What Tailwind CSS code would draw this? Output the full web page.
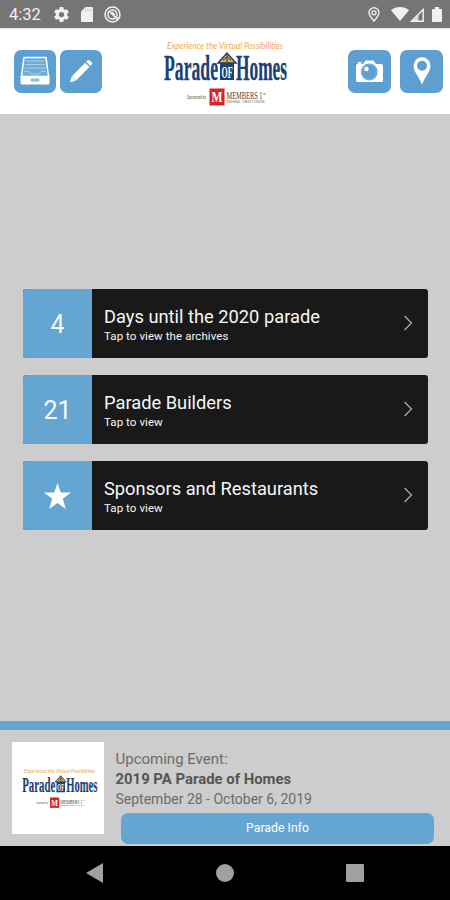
<!DOCTYPE html>
<html lang="en">
<head>
<meta charset="utf-8">
<title>Parade of Homes</title>
<script src="https://cdn.jsdelivr.net/npm/@tailwindcss/browser@4"></script>
</head>
<body class="w-[450px] h-[900px] overflow-hidden bg-[#cdcdcd] font-['Roboto',sans-serif] flex flex-col">
<svg class="hidden">
  <symbol id="logo" viewBox="0 0 126 68">
    <text x="5" y="10" font-family="Lato" font-style="italic" font-size="9.500" fill="#f0a850" textLength="116" lengthAdjust="spacingAndGlyphs">Experience the Virtual Possibilities</text>
    <g font-family="Liberation Serif" font-weight="bold" fill="#1d4172" stroke="#1d4172" stroke-width=".3">
      <text x="2" y="40.500" font-size="35" textLength="54" lengthAdjust="spacingAndGlyphs">Parade</text>
      <text x="74" y="40.500" font-size="35" textLength="51" lengthAdjust="spacingAndGlyphs">Homes</text>
    </g>
    <path d="M58 24h14v17H58z" fill="#1d4172"/>
    <path d="M56 24l9-10 9 10z" fill="#e9a82f" stroke="#1d4172" stroke-width="1.500"/>
    <path d="M65 15v8M61 21l4-3 4 3" stroke="#1d4172" fill="none"/>
    <text x="59.500" y="39" font-family="Liberation Serif" font-weight="bold" font-size="16" fill="#fff" textLength="11" lengthAdjust="spacingAndGlyphs">OF</text>
    <text x="25" y="60" font-family="Roboto" font-size="4.500" fill="#555" textLength="19" lengthAdjust="spacingAndGlyphs">Sponsored by</text>
    <path d="M47.500 49.500h15v17h-15z" fill="#d5232b"/>
    <text x="49.500" y="63" font-family="Liberation Serif" font-weight="bold" font-size="14" fill="#fff" textLength="11" lengthAdjust="spacingAndGlyphs">M</text>
    <text x="64.500" y="60" font-family="Liberation Serif" font-size="10" fill="#444" textLength="36" lengthAdjust="spacingAndGlyphs">MEMBERS 1</text>
    <text x="101" y="56" font-family="Liberation Serif" font-size="4" fill="#444">st</text>
    <text x="64.500" y="63.500" font-family="Roboto" font-size="3.200" fill="#777" textLength="38" lengthAdjust="spacingAndGlyphs">FEDERAL CREDIT UNION</text>
  </symbol>
  <symbol id="chevron" viewBox="0 0 10 16"><path d="M1.500 1l7 7-7 7" fill="none" stroke="#aaa" stroke-width="1.300"/></symbol>
</svg>

<header class="h-7 shrink-0 bg-[#757575] flex items-center text-[#f0f0f0] pl-[9px] pr-[8px]">
  <span class="text-[16.500px] leading-7 w-[45px] pt-px">4:32</span>
  <svg class="w-[15px] h-[15px] mt-px" viewBox="2 2 20 20" fill="currentColor"><path d="M19.430 12.980c.04-.32.07-.64.07-.98s-.03-.66-.07-.98l2.110-1.650a.5.5 0 0 0 .12-.64l-2-3.460a.5.5 0 0 0-.61-.22l-2.490 1c-.52-.4-1.080-.73-1.690-.98l-.38-2.650A.49.49 0 0 0 14 2h-4a.49.49 0 0 0-.49.420l-.38 2.650c-.61.250-1.170.590-1.690.980l-2.490-1a.49.49 0 0 0-.61.220l-2 3.460a.49.49 0 0 0 .12.640l2.110 1.650c-.04.320-.07.650-.07.980s.03.660.070.980l-2.110 1.650a.5.5 0 0 0-.12.640l2 3.460c.12.220.390.300.610.220l2.490-1c.52.400 1.080.730 1.690.980l.38 2.650c.03.240.240.420.490.420h4c.25 0 .46-.18.490-.42l.38-2.650c.61-.25 1.170-.59 1.690-.98l2.490 1c.23.090.490 0 .610-.22l2-3.460a.5.5 0 0 0-.12-.64zM12 15.500a3.500 3.500 0 1 1 0-7 3.500 3.500 0 0 1 0 7z"/></svg>
  <svg class="w-[12px] h-[15px] ml-[12px] mt-px" viewBox="0 0 12 15"><path d="M4.500 0H11a1 1 0 0 1 1 1v13a1 1 0 0 1-1 1H1a1 1 0 0 1-1-1V4.500z" fill="currentColor"/><path d="M4.500 2v2.500M7 2v2.500M9.500 2v2.500" stroke="#c4c4c4"/></svg>
  <svg class="w-[17px] h-[17px] ml-[11px]" viewBox="0 0 17 17" fill="none" stroke="currentColor"><circle cx="8.500" cy="8.500" r="7.500" stroke-width="1.600"/><circle cx="8.500" cy="8.500" r="4.500" stroke-width="1.500"/><path d="M5 5l7 7M8 6l3 3M13 11v4" stroke-width="1.500"/></svg>
  <svg class="w-[12px] h-[15px] ml-auto" viewBox="0 0 12 15" fill="none" stroke="currentColor"><path d="M6 14C3 10.500 1 8 1 5.700a5 5 0 0 1 10 0C11 8 9 10.500 6 14z" stroke-width="1.400"/><circle cx="6" cy="5.800" r="2" stroke-width="1.300"/></svg>
  <svg class="w-[18px] h-[14px] ml-[11px]" viewBox="0 0 18 14"><path d="M0 3.200C5-1 13-1 18 3.200L9 14z" fill="currentColor"/></svg>
  <svg class="w-[14px] h-[14px] ml-px mt-px" viewBox="0 0 14 14"><path d="M1.500 13.200H13.200V1.500z" fill="none" stroke="currentColor" stroke-width="1.400"/><path d="M1 13.500L8.500 6v7.500z" fill="currentColor" fill-opacity=".8"/></svg>
  <svg class="w-[10px] h-[15px] ml-[8px]" viewBox="0 0 10 15"><path d="M3 0h4v2h2a1 1 0 0 1 1 1v11a1 1 0 0 1-1 1H1a1 1 0 0 1-1-1V3a1 1 0 0 1 1-1h2z" fill="currentColor"/></svg>
</header>

<nav class="h-[86px] shrink-0 bg-white border-t border-[#ddd] flex items-start pl-[14px] pr-[7px]">
  <div class="flex gap-[4px] pt-[20.500px] w-[148px]">
    <div class="w-[42px] h-[43px] rounded-[7px] bg-[#5d9fd0] flex items-center justify-center">
      <svg class="w-[30px] h-[30px]" viewBox="0 0 30 30"><path d="M4 1.500h22l2.500 19h-27z" fill="#6eabd6" stroke="#fff" stroke-width="1.500"/><path d="M5.500 5h19M5 8.500h20M4.500 12h21M4 15.500h5l2 2.500h8l2-2.500h5" fill="none" stroke="#b9d8ee" stroke-width=".8"/><path d="M.5 20h29v7a1.500 1.500 0 0 1-1.500 1.500H2A1.500 1.500 0 0 1 .5 27z" fill="#fff"/><rect x="10.500" y="22.500" width="9" height="3" rx="1.500" fill="#8dbbdd"/></svg>
    </div>
    <div class="w-[42px] h-[43px] rounded-[7px] bg-[#5d9fd0] flex items-center justify-center">
      <svg class="w-[26px] h-[26px]" viewBox="0 0 26 26" fill="#fff"><path d="M2 24.500l1.800-6.300L17.200 4.800l4.200 4.200L8 22.500zM18.200 3.800l1.200-1.200a1.800 1.800 0 0 1 2.500 0l1.700 1.700a1.800 1.800 0 0 1 0 2.500L22.400 8z"/><path d="M3.500 18l4.800 4.800" stroke="#5d9fd0" stroke-width=".6"/></svg>
    </div>
  </div>
  <svg class="w-[126px] h-[68px] mt-[10px]"><use href="#logo"/></svg>
  <div class="flex gap-[9px] pt-[20.500px] ml-auto">
    <div class="w-[43px] h-[43px] rounded-[7px] bg-[#5d9fd0] flex items-center justify-center">
      <svg class="w-[27px] h-[22px]" viewBox="0 0 27 22"><path d="M1.500 4H7l2.500-3.500h8L20 4h5.500A1.500 1.500 0 0 1 27 5.500v15a1.500 1.500 0 0 1-1.500 1.500h-24A1.500 1.500 0 0 1 0 20.500v-15A1.500 1.500 0 0 1 1.500 4z" fill="#fff"/><path d="M2 2h3.500v2H2z" fill="#fff"/><circle cx="13.300" cy="12" r="8.400" fill="#5d9fd0"/><circle cx="13.300" cy="12" r="7.300" fill="none" stroke="#8dbde0" stroke-width=".7"/><circle cx="10.500" cy="9" r="2.200" fill="#fff"/></svg>
    </div>
    <div class="w-[43px] h-[43px] rounded-[7px] bg-[#5d9fd0] flex items-center justify-center">
      <svg class="w-[18px] h-[28px]" viewBox="0 0 18 28"><path d="M9 28C6.500 20 .5 15 .5 8.800a8.500 8.500 0 0 1 17 0C17.500 15 11.500 20 9 28zM9 3.700a5 5 0 1 0 0 10 5 5 0 0 0 0-10z" fill="#fff" fill-rule="evenodd"/></svg>
    </div>
  </div>
</nav>

<main class="flex-1 pt-[175px] pl-[23px] pr-[22px] flex flex-col gap-[17px] text-[#f7f7f7]">
  <section class="h-[69px] rounded-[3px] overflow-hidden bg-[#191919] flex items-center">
    <div class="w-[69px] h-full bg-[#65a5d2] flex items-center justify-center text-[25px] pt-[3px]">4</div>
    <div class="pl-[12px] flex-1 whitespace-nowrap"><h2 class="text-[18.300px] leading-[23px] pt-[2px]">Days until the 2020 parade</h2><p class="text-[11.500px] leading-[16px] tracking-[0.080px]">Tap to view the archives</p></div>
    <svg class="w-[10px] h-[16px] mr-[15px] mb-[2px]"><use href="#chevron"/></svg>
  </section>
  <section class="h-[69px] rounded-[3px] overflow-hidden bg-[#191919] flex items-center">
    <div class="w-[69px] h-full bg-[#65a5d2] flex items-center justify-center text-[25px] pt-[3px]">21</div>
    <div class="pl-[12px] flex-1 whitespace-nowrap"><h2 class="text-[18.300px] leading-[23px] pt-[2px]">Parade Builders</h2><p class="text-[11.500px] leading-[16px] tracking-[0.080px]">Tap to view</p></div>
    <svg class="w-[10px] h-[16px] mr-[15px] mb-[2px]"><use href="#chevron"/></svg>
  </section>
  <section class="h-[69px] rounded-[3px] overflow-hidden bg-[#191919] flex items-center">
    <div class="w-[69px] h-full bg-[#65a5d2] flex items-center justify-center"><svg class="w-[27px] h-[26px]" viewBox="0 0 27 26"><path d="M13.500 0l3.300 9.500H27l-8.200 6.200L21.800 26l-8.300-6.100L5.200 26l3-10.300L0 9.500h10.200z" fill="#fff"/></svg></div>
    <div class="pl-[12px] flex-1 whitespace-nowrap"><h2 class="text-[18.300px] leading-[23px] pt-[2px]">Sponsors and Restaurants</h2><p class="text-[11.500px] leading-[16px] tracking-[0.080px]">Tap to view</p></div>
    <svg class="w-[10px] h-[16px] mr-[15px] mb-[2px]"><use href="#chevron"/></svg>
  </section>
</main>

<section class="h-[125px] shrink-0 border-t-[9px] border-[#65a5d2] flex pl-[12px] pr-[16px]">
  <div class="w-[92px] h-[92px] bg-white mt-[12px] pl-[9px] pt-[25px] shrink-0"><svg class="w-[77px] h-[42px]"><use href="#logo"/></svg></div>
  <div class="flex-1 pl-[11.500px] pt-[19px] text-[#6b6b6b] whitespace-nowrap">
    <p class="text-[15px] leading-[20px]">Upcoming Event:</p>
    <p class="text-[14.900px] leading-[20px] font-bold text-[#555]">2019 PA Parade of Homes</p>
    <p class="text-[14px] leading-[20px]">September 28 - October 6, 2019</p>
    <div class="ml-[5.500px] mt-[3.500px] h-[31px] rounded-[7px] bg-[#65a5d2] text-white text-[12.300px] flex items-center justify-center pt-px">Parade Info</div>
  </div>
</section>

<footer class="h-[54px] shrink-0 bg-black flex items-center justify-between pl-[86px] pr-[86px]">
  <svg class="w-[17px] h-[20px]" viewBox="0 0 17 20"><path d="M0 10L17 0v20z" fill="#a0a0a0"/></svg>
  <div class="w-[18px] h-[18px] rounded-full bg-[#a0a0a0]"></div>
  <div class="w-[18px] h-[18px] rounded-[1px] bg-[#a0a0a0]"></div>
</footer>
</body>
</html>
